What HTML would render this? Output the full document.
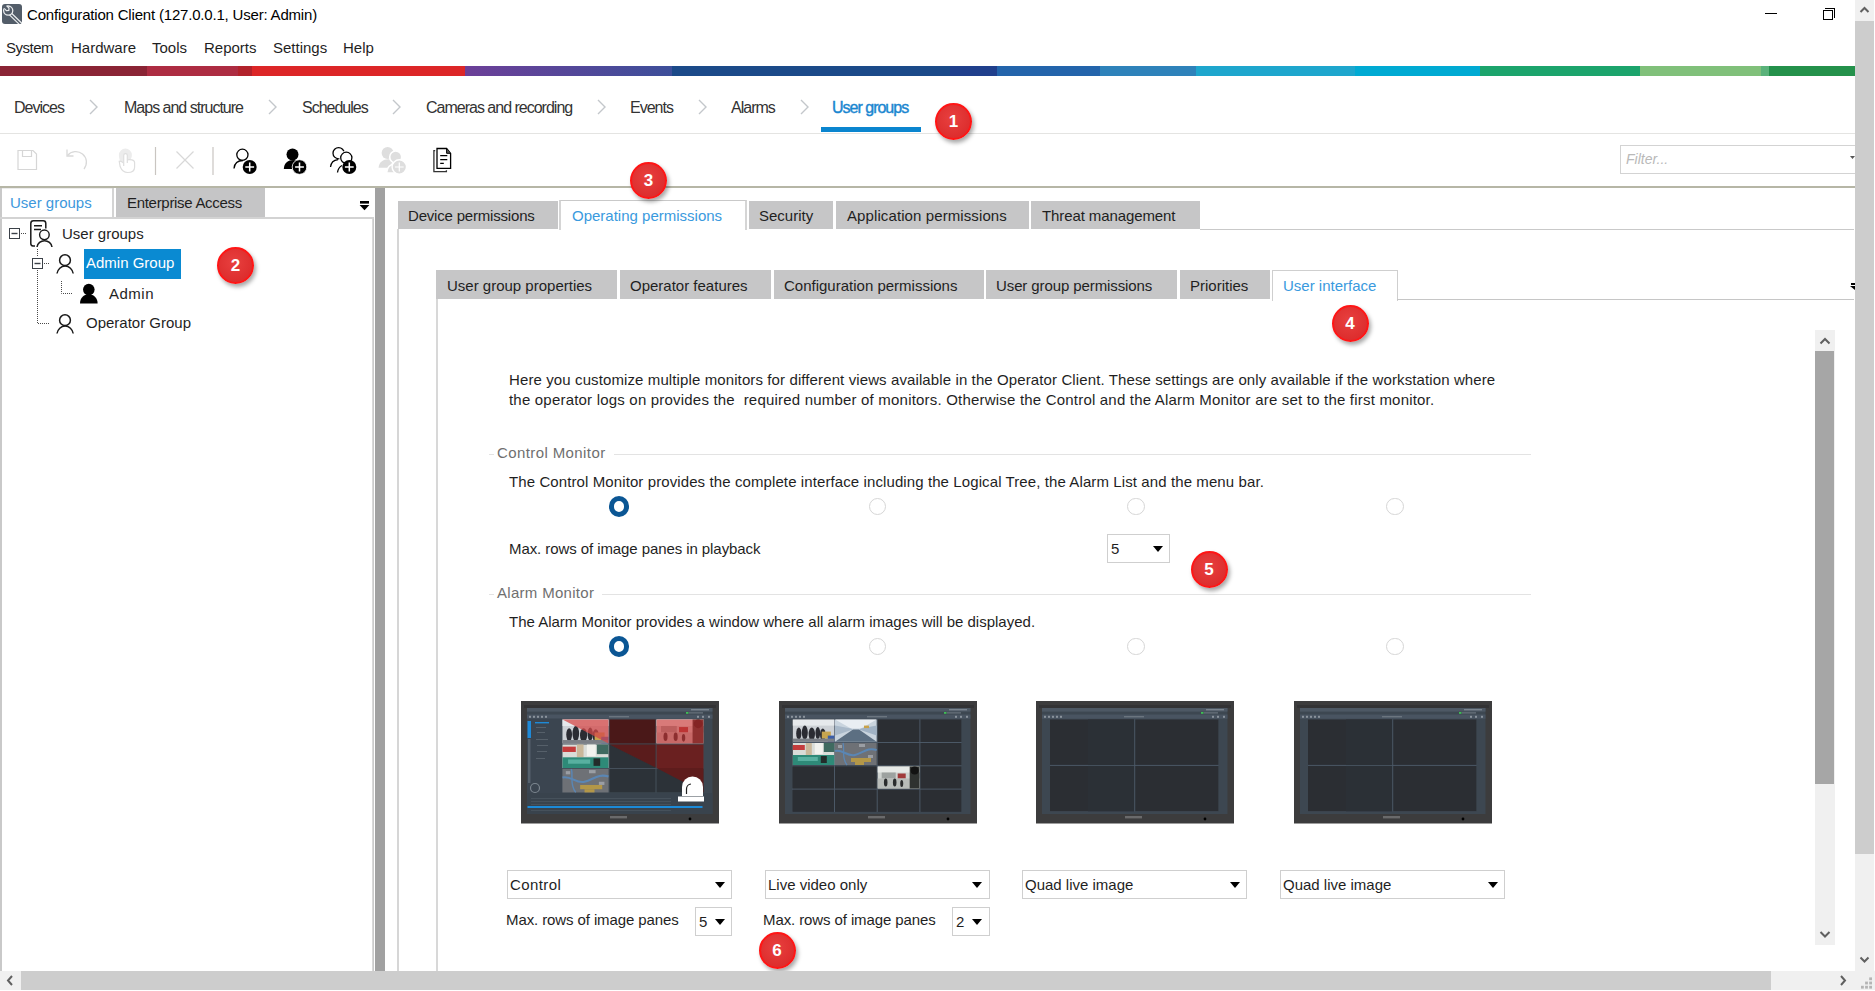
<!DOCTYPE html>
<html><head><meta charset="utf-8">
<style>
*{box-sizing:border-box;margin:0;padding:0}
html,body{width:1875px;height:991px;overflow:hidden;background:#fff;position:relative;font-family:"Liberation Sans",sans-serif;color:#1f1f1f}
.a{position:absolute}
.t{position:absolute;font-size:15px;line-height:20px;white-space:pre}
.bc{position:absolute;font-size:16px;line-height:20px;white-space:pre;letter-spacing:-1px;color:#333}
.chev{position:absolute;width:9px;height:16px}
.tab{position:absolute;background:#c6c6c7;}
.tabw{position:absolute;background:#fff;border:1px solid #d2d2d2;border-bottom:none}
.badge{position:absolute;width:37px;height:37px;border-radius:50%;background:radial-gradient(circle at 45% 40%,#e8403f 0%,#dd2e2e 70%);border:2px solid #ff1515;box-shadow:2px 3px 4px rgba(0,0,0,.35);color:#fff;font-weight:bold;font-size:17px;line-height:33px;text-align:center}
.combo{position:absolute;border:1px solid #cfcfcf;background:#fff}
.arr{position:absolute;width:0;height:0;border-left:5px solid transparent;border-right:5px solid transparent;border-top:6px solid #000}
.radio{position:absolute;width:19px;height:19px;border-radius:50%;border:1.5px solid #d6d6d6;background:#fff}
.radio.on{border:4px solid #0b5694}
</style></head><body>

<!-- ============ TITLE BAR ============ -->
<div class="a" style="left:2px;top:4px;width:20px;height:20px;background:#535d69;border-radius:3px"></div>
<svg class="a" style="left:2px;top:4px" width="20" height="20" viewBox="0 0 20 20">
 <path d="M8.6 10.2 L18.2 19.4" stroke="#e9ebed" stroke-width="3.8" stroke-linecap="round"/>
 <path d="M8.6 10.2 L18.2 19.4" stroke="#535d69" stroke-width="1.4" stroke-linecap="round"/>
 <circle cx="6.2" cy="6.6" r="4.6" fill="#535d69" stroke="#e9ebed" stroke-width="1.3"/>
 <path d="M1.2 3.6 L4.2 1.2 L7.4 4.6 L6.4 7.6 L3.6 7.8 Z" fill="#535d69"/>
 <path d="M2.2 4.4 L4.4 6.6 L6.8 6.4 L7 4 L4.6 1.8" fill="none" stroke="#e9ebed" stroke-width="1.2"/>
</svg>
<div class="t" style="left:27px;top:5px;color:#000;letter-spacing:-0.19px">Configuration Client (127.0.0.1, User: Admin)</div>
<div class="a" style="left:1765px;top:13px;width:12px;height:1px;background:#000"></div>
<div class="a" style="left:1823px;top:10px;width:10px;height:10px;border:1px solid #000;background:#fff"></div>
<div class="a" style="left:1825px;top:8px;width:10px;height:10px;border-top:1px solid #000;border-right:1px solid #000"></div>

<!-- ============ MENU ============ -->
<div class="t" style="left:6px;top:38px;letter-spacing:-0.5px">System</div>
<div class="t" style="left:71px;top:38px">Hardware</div>
<div class="t" style="left:152px;top:38px">Tools</div>
<div class="t" style="left:204px;top:38px">Reports</div>
<div class="t" style="left:273px;top:38px">Settings</div>
<div class="t" style="left:343px;top:38px">Help</div>

<!-- ============ COLOUR BAR ============ -->
<div class="a" style="left:0;top:66px;width:1855px;height:10px;background:linear-gradient(90deg,
#8a2435 0px,#8a2435 147px,#ad2c42 147px,#ad2c42 238px,#b2222b 238px,#b2222b 252px,#dc2627 252px,#dc2627 465px,
#6c3f98 465px,#3d4f9a 672px,#1b4a89 672px,#1b4a89 950px,#203f8c 950px,#203f8c 997px,#2364ab 997px,#2364ab 1100px,
#2e82ba 1100px,#2e82ba 1196px,#1ea6cd 1196px,#1ea6cd 1355px,#00aad3 1355px,#00aad3 1480px,#1ca46c 1480px,#1ca46c 1640px,
#80c07a 1640px,#80c07a 1761px,#5ab27a 1761px,#5ab27a 1769px,#24914b 1769px,#24914b 1855px)"></div>

<!-- ============ BREADCRUMB ============ -->
<div class="bc" style="left:14px;top:98px">Devices</div>
<div class="bc" style="left:124px;top:98px">Maps and structure</div>
<div class="bc" style="left:302px;top:98px">Schedules</div>
<div class="bc" style="left:426px;top:98px">Cameras and recording</div>
<div class="bc" style="left:630px;top:98px">Events</div>
<div class="bc" style="left:731px;top:98px">Alarms</div>
<div class="bc" style="left:832px;top:98px;color:#1a86d0;-webkit-text-stroke:0.4px #1a86d0">User groups</div>
<svg class="chev" style="left:89px;top:99px" viewBox="0 0 9 16"><path d="M1 1 L8 8 L1 15" fill="none" stroke="#c3c7cb" stroke-width="1.4"/></svg>
<svg class="chev" style="left:268px;top:99px" viewBox="0 0 9 16"><path d="M1 1 L8 8 L1 15" fill="none" stroke="#c3c7cb" stroke-width="1.4"/></svg>
<svg class="chev" style="left:392px;top:99px" viewBox="0 0 9 16"><path d="M1 1 L8 8 L1 15" fill="none" stroke="#c3c7cb" stroke-width="1.4"/></svg>
<svg class="chev" style="left:597px;top:99px" viewBox="0 0 9 16"><path d="M1 1 L8 8 L1 15" fill="none" stroke="#c3c7cb" stroke-width="1.4"/></svg>
<svg class="chev" style="left:698px;top:99px" viewBox="0 0 9 16"><path d="M1 1 L8 8 L1 15" fill="none" stroke="#c3c7cb" stroke-width="1.4"/></svg>
<svg class="chev" style="left:800px;top:99px" viewBox="0 0 9 16"><path d="M1 1 L8 8 L1 15" fill="none" stroke="#c3c7cb" stroke-width="1.4"/></svg>
<div class="a" style="left:821px;top:127px;width:100px;height:5px;background:#0a85cf"></div>
<div class="a" style="left:0;top:133px;width:1855px;height:1px;background:#e4e4e2"></div>

<!-- ============ TOOLBAR ============ -->
<svg class="a" style="left:0;top:140px" width="470" height="40" viewBox="0 140 470 40">
 <g fill="none" stroke="#d6d6d6" stroke-width="1.2">
  <path d="M18 150.5 H33 L36.5 154 V169.5 H18 Z"/>
  <path d="M22.5 150.5 V156.5 H31.5 V150.5"/>
 </g>
 <g fill="none" stroke="#d9d9d9" stroke-width="1.3">
  <path d="M67.5 155.5 A10 10 0 0 1 84 169"/>
  <path d="M67 149.5 V156 H73.5"/>
 </g>
 <g stroke="#dedede" stroke-width="1.2">
  <path d="M125.4 148.6 A6.5 6.5 0 0 1 131.9 155 C131.9 158 130.5 160 128.5 161.5 L121.5 163.5 C119.8 161 118.9 158 118.9 155 A6.5 6.5 0 0 1 125.4 148.6 Z" fill="#ececec" stroke="none"/>
  <path d="M127 159.8 C130 159.2 134.6 159.6 134.6 162.6 V167.2 C134.6 170.6 131.6 172.5 127.6 172.5 C123.8 172.5 121.6 170.2 120.2 166.8 L119.2 161.2 C120.5 160.8 122 161.5 123.6 163 Z" fill="#fff"/>
  <path d="M123.7 166 V155.5 A1.8 1.8 0 0 1 127.3 155.5 V163" fill="#fff"/>
 </g>
 <path d="M155.5 147 V175" stroke="#c9c5c1" stroke-width="1.2"/>
 <path d="M176.5 151.5 L193.5 168.5 M193.5 151.5 L176.5 168.5" stroke="#d8d8d8" stroke-width="1.2"/>
 <path d="M213 147 V175" stroke="#c9c5c1" stroke-width="1.2"/>
 <!-- add user outline -->
 <g>
  <circle cx="242.4" cy="154.8" r="5.6" fill="none" stroke="#000" stroke-width="1.3"/>
  <path d="M234 168.5 C234.5 163.5 238 160.5 243 160.5" fill="none" stroke="#000" stroke-width="1.3"/>
  <circle cx="249.7" cy="167" r="7" fill="#000"/>
  <path d="M249.7 162.6 V171.4 M245.3 167 H254.1" stroke="#fff" stroke-width="1.5"/>
 </g>
 <!-- add user filled -->
 <g>
  <circle cx="292.5" cy="154.5" r="6" fill="#000"/>
  <path d="M283.8 169 C284 163 288 160 293.5 160 L298 161 L292 169 Z" fill="#000"/>
  <circle cx="299.5" cy="167" r="7.3" fill="#000" stroke="#fff" stroke-width="0.8"/>
  <path d="M299.5 162.6 V171.4 M295.1 167 H303.9" stroke="#fff" stroke-width="1.5"/>
 </g>
 <!-- add group -->
 <g fill="none" stroke="#000" stroke-width="1.3">
  <circle cx="338.6" cy="153.2" r="5.6"/>
  <path d="M330.5 167 C331 162.5 334 160 338 159.6"/>
  <circle cx="346.3" cy="157.8" r="5.6" fill="#fff" stroke="#fff" stroke-width="3"/>
  <circle cx="346.3" cy="157.8" r="5.6"/>
  <path d="M337.5 172.5 C338 169 340 166.5 342 165.5"/>
  <circle cx="349.3" cy="167" r="7" fill="#000" stroke="none"/>
  <path d="M349.3 162.6 V171.4 M344.9 167 H353.7" stroke="#fff" stroke-width="1.5"/>
 </g>
 <!-- disabled group -->
 <g fill="#dedede">
  <circle cx="387.6" cy="153" r="6"/>
  <path d="M378.6 167.8 C379 162 383 159.2 388.5 159.2 L393 160 L390 167.8 Z"/>
  <g stroke="#fff" stroke-width="1.6">
   <circle cx="395.7" cy="157" r="6"/>
   <path d="M386.5 173 C387 167 390.5 164 395.7 164 C400 164 403 166 404 169 V173 Z"/>
  </g>
  <circle cx="399.3" cy="167" r="7.2" stroke="#fff" stroke-width="1.4"/>
  <path d="M399.3 162.6 V171.4 M394.9 167 H403.7" stroke="#fff" stroke-width="1.2"/>
 </g>
 <!-- documents -->
 <g fill="none" stroke="#000" stroke-width="1.3">
  <path d="M437 148.5 H446.6 L450.6 153.4 V168.3 H437 Z" fill="#fff"/>
  <path d="M446.6 148.8 V153.3 H450.4" fill="#555" stroke-width="1"/>
  <path d="M435.2 150.6 H433.9 V171.6 H446.4 V170.2" stroke="#333"/>
  <path d="M440.2 155.7 H447.3 M440.2 159.6 H447.3 M440.2 163.4 H443.8" stroke-width="1.3"/>
 </g>
</svg>
<div class="a" style="left:1620px;top:145px;width:240px;height:29px;border:1px solid #d3d3d3;background:#fff"></div>
<svg class="a" style="left:1849px;top:155px" width="6" height="6"><path d="M1 1 H6 L3.5 4 Z" fill="#555"/></svg>
<div class="t" style="left:1626px;top:149px;font-style:italic;color:#b9b9b9;font-size:14px">Filter...</div>
<div class="a" style="left:0;top:186px;width:1855px;height:2px;background:#b6b6a6"></div>


<!-- ============ LEFT PANEL ============ -->
<div class="a" style="left:0;top:188px;width:2px;height:783px;background:#c9c9c9"></div>
<div class="a" style="left:372px;top:218px;width:2px;height:753px;background:linear-gradient(90deg,#e0e0e0,#c4c4c4)"></div>
<div class="a" style="left:2px;top:188px;width:111px;height:30px;background:#fff;border-top:1px solid #ececec"></div>
<div class="a" style="left:112px;top:188px;width:2px;height:30px;background:#d4d4d4"></div>
<div class="a" style="left:116px;top:188px;width:149px;height:29px;background:#c5c5c6"></div>
<div class="a" style="left:0;top:217px;width:374px;height:2px;background:#d3d3d3"></div>
<div class="t" style="left:10px;top:193px;color:#3d98dc">User groups</div>
<div class="t" style="left:127px;top:193px;color:#1f1f1f;letter-spacing:-0.3px">Enterprise Access</div>
<svg class="a" style="left:358px;top:199px" width="14" height="14"><rect x="2" y="2" width="9" height="2.6" fill="#000"/><path d="M1.6 6 H11.4 L6.5 11.2 Z" fill="#000"/></svg>
<!-- splitter -->
<div class="a" style="left:375px;top:188px;width:10px;height:783px;background:#a1a1a1"></div>

<!-- tree -->
<svg class="a" style="left:0;top:218px" width="200" height="125" viewBox="0 218 200 125">
 <g fill="none" stroke="#3b4148" stroke-width="1">
  <rect x="9.5" y="228.5" width="10" height="10"/>
  <path d="M11.5 233.5 H17.5" stroke-width="1.4"/>
  <rect x="32.5" y="258.5" width="10" height="10"/>
  <path d="M34.5 263.5 H40.5" stroke-width="1.4"/>
 </g>
 <g stroke="#4a4a4a" stroke-width="1" stroke-dasharray="1 1" fill="none">
  <path d="M21 233.5 H26"/>
  <path d="M37.5 249 V257"/>
  <path d="M44 263.5 H50"/>
  <path d="M37.5 270 V323.5 H50"/>
  <path d="M61.5 281 V293.5 H73"/>
 </g>
 <!-- doc+user icon -->
 <g fill="none" stroke="#1a1a1a" stroke-width="1.5">
  <path d="M35 246 H33 A2.5 2.5 0 0 1 30.8 243.5 V223.4 A2.6 2.6 0 0 1 33.4 220.8 H43.2 A2.6 2.6 0 0 1 45.8 223.4 V228.5"/>
  <path d="M34 225.8 H42 M34 229.4 H41"/>
  <circle cx="44.4" cy="234.8" r="4.8" stroke-width="1.4"/>
  <path d="M37 247 A7.6 7.6 0 0 1 52 247" stroke-width="1.5"/>
 </g>
 <!-- outline person admin group -->
 <g fill="none" stroke="#1a1a1a" stroke-width="1.5">
  <circle cx="65" cy="260.2" r="5.4"/>
  <path d="M57 273.5 A8.2 8.8 0 0 1 73.2 273.5"/>
  <circle cx="65" cy="320.2" r="5.4"/>
  <path d="M57 333.5 A8.2 8.8 0 0 1 73.2 333.5"/>
 </g>
 <!-- filled person -->
 <g fill="#000">
  <circle cx="88.8" cy="289.6" r="5.8"/>
  <path d="M80 303.6 C80 298 83.5 294.6 88.8 294.6 C94 294.6 97.6 298 97.6 303.6 Z"/>
 </g>
</svg>
<div class="a" style="left:84px;top:249px;width:97px;height:30px;background:#0a8ad2"></div>
<div class="t" style="left:62px;top:224px">User groups</div>
<div class="t" style="left:86px;top:253px;color:#fff">Admin Group</div>
<div class="t" style="left:109px;top:284px;letter-spacing:0.5px">Admin</div>
<div class="t" style="left:86px;top:313px">Operator Group</div>


<!-- ============ RIGHT PANEL ============ -->
<!-- tab row 1 -->
<div class="tab" style="left:398px;top:201px;width:160px;height:28px"></div>
<div class="a" style="left:559px;top:200px;width:188px;height:30px;background:#fff;border:2px solid #d5d5d5;border-top:1px solid #c9c9c9;border-bottom:none"></div>
<div class="tab" style="left:749px;top:201px;width:84px;height:28px"></div>
<div class="tab" style="left:836px;top:201px;width:193px;height:28px"></div>
<div class="tab" style="left:1031px;top:201px;width:169px;height:28px"></div>
<div class="a" style="left:1200px;top:229px;width:654px;height:1px;background:#c9c9c9"></div>
<div class="a" style="left:397px;top:229px;width:2px;height:742px;background:#d6d6d6"></div>
<div class="t" style="left:408px;top:206px;letter-spacing:-0.19px">Device permissions</div>
<div class="t" style="left:572px;top:206px;color:#3a9ade">Operating permissions</div>
<div class="t" style="left:759px;top:206px">Security</div>
<div class="t" style="left:847px;top:206px;letter-spacing:0.1px">Application permissions</div>
<div class="t" style="left:1042px;top:206px;letter-spacing:-0.1px">Threat management</div>

<!-- tab row 2 -->
<div class="tab" style="left:436px;top:270px;width:181px;height:29px"></div>
<div class="tab" style="left:620px;top:270px;width:151px;height:29px"></div>
<div class="tab" style="left:774px;top:270px;width:210px;height:29px"></div>
<div class="tab" style="left:986px;top:270px;width:191px;height:29px"></div>
<div class="tab" style="left:1180px;top:270px;width:90px;height:29px"></div>
<div class="a" style="left:1272px;top:270px;width:126px;height:31px;background:#fff;border:1px solid #cfcfcf;border-bottom:none"></div>
<div class="a" style="left:1397px;top:299px;width:457px;height:1px;background:#c6c6c6"></div>
<div class="a" style="left:436px;top:299px;width:2px;height:672px;background:#d8d8d8"></div>
<div class="t" style="left:447px;top:276px">User group properties</div>
<div class="t" style="left:630px;top:276px">Operator features</div>
<div class="t" style="left:784px;top:276px">Configuration permissions</div>
<div class="t" style="left:996px;top:276px;letter-spacing:-0.1px">User group permissions</div>
<div class="t" style="left:1190px;top:276px">Priorities</div>
<div class="t" style="left:1283px;top:276px;color:#3a9ade">User interface</div>
<svg class="a" style="left:1848px;top:282px" width="7" height="10"><rect x="3" y="1" width="4" height="2" fill="#000"/><path d="M2 4 H7 V8 Z" fill="#000"/></svg>

<!-- inner scrollbar -->
<div class="a" style="left:1815px;top:330px;width:20px;height:615px;background:#f0f0f0"></div>
<div class="a" style="left:1815px;top:351px;width:19px;height:433px;background:#a6a6a6"></div>
<svg class="a" style="left:1815px;top:330px" width="20" height="21"><path d="M5.5 13.5 L10 9 L14.5 13.5" fill="none" stroke="#606060" stroke-width="2"/></svg>
<svg class="a" style="left:1815px;top:924px" width="20" height="21"><path d="M5.5 8 L10 12.5 L14.5 8" fill="none" stroke="#606060" stroke-width="2"/></svg>

<!-- content -->
<div class="t" style="left:509px;top:370px;letter-spacing:0.11px">Here you customize multiple monitors for different views available in the Operator Client. These settings are only available if the workstation where</div>
<div class="t" style="left:509px;top:390px;letter-spacing:0.2px">the operator logs on provides the  required number of monitors. Otherwise the Control and the Alarm Monitor are set to the first monitor.</div>

<div class="a" style="left:489px;top:454px;width:5px;height:1px;background:#e3e3e3"></div>
<div class="a" style="left:614px;top:454px;width:917px;height:1px;background:#e3e3e3"></div>
<div class="t" style="left:497px;top:443px;color:#6f6f6f;letter-spacing:0.4px">Control Monitor</div>
<div class="t" style="left:509px;top:472px;letter-spacing:0.1px">The Control Monitor provides the complete interface including the Logical Tree, the Alarm List and the menu bar.</div>
<div class="radio on" style="left:608.5px;top:496px;width:20.5px;height:20.5px;border-width:5px"></div>
<div class="radio" style="left:868.5px;top:497.5px;width:17.5px;height:17.5px"></div>
<div class="radio" style="left:1127px;top:497.5px;width:17.5px;height:17.5px"></div>
<div class="radio" style="left:1386px;top:497.5px;width:17.5px;height:17.5px"></div>
<div class="t" style="left:509px;top:539px;letter-spacing:-0.08px">Max. rows of image panes in playback</div>
<div class="combo" style="left:1107px;top:534px;width:63px;height:29px"></div>
<div class="t" style="left:1111px;top:539px">5</div>
<div class="arr" style="left:1153px;top:546px"></div>

<div class="a" style="left:489px;top:594px;width:5px;height:1px;background:#e3e3e3"></div>
<div class="a" style="left:602px;top:594px;width:929px;height:1px;background:#e3e3e3"></div>
<div class="t" style="left:497px;top:583px;color:#6f6f6f;letter-spacing:0.3px">Alarm Monitor</div>
<div class="t" style="left:509px;top:612px">The Alarm Monitor provides a window where all alarm images will be displayed.</div>
<div class="radio on" style="left:608.5px;top:636px;width:20.5px;height:20.5px;border-width:5px"></div>
<div class="radio" style="left:868.5px;top:637.5px;width:17.5px;height:17.5px"></div>
<div class="radio" style="left:1127px;top:637.5px;width:17.5px;height:17.5px"></div>
<div class="radio" style="left:1386px;top:637.5px;width:17.5px;height:17.5px"></div>

<!-- combos -->
<div class="combo" style="left:507px;top:870px;width:225px;height:29px"></div>
<div class="t" style="left:510px;top:875px;letter-spacing:0.4px">Control</div>
<div class="arr" style="left:715px;top:882px"></div>
<div class="combo" style="left:765px;top:870px;width:225px;height:29px"></div>
<div class="t" style="left:768px;top:875px">Live video only</div>
<div class="arr" style="left:972px;top:882px"></div>
<div class="combo" style="left:1022px;top:870px;width:225px;height:29px"></div>
<div class="t" style="left:1025px;top:875px">Quad live image</div>
<div class="arr" style="left:1230px;top:882px"></div>
<div class="combo" style="left:1280px;top:870px;width:225px;height:29px"></div>
<div class="t" style="left:1283px;top:875px">Quad live image</div>
<div class="arr" style="left:1488px;top:882px"></div>

<div class="t" style="left:506px;top:910px;letter-spacing:-0.1px">Max. rows of image panes</div>
<div class="combo" style="left:695px;top:907px;width:37px;height:29px"></div>
<div class="t" style="left:699px;top:912px">5</div>
<div class="arr" style="left:715px;top:919px"></div>
<div class="t" style="left:763px;top:910px;letter-spacing:-0.1px">Max. rows of image panes</div>
<div class="combo" style="left:952px;top:907px;width:38px;height:29px"></div>
<div class="t" style="left:956px;top:912px">2</div>
<div class="arr" style="left:972px;top:919px"></div>


<!-- ============ MONITORS ============ -->
<svg class="a" style="left:0;top:0;pointer-events:none" width="1875" height="991">
<defs>
 <g id="base">
  <rect x="0" y="0" width="198" height="122.5" fill="#3c3c3d"/>
  <rect x="3" y="4" width="192" height="3" fill="#333335"/>
  <rect x="6" y="7" width="185.5" height="106" fill="#3d4751"/>
  <rect x="6" y="7" width="185.5" height="3.6" fill="#4d5864"/>
  <rect x="6" y="13.5" width="185.5" height="4.2" fill="#495461"/>
  <rect x="170" y="8" width="18" height="1.4" fill="#7a848e"/>
  <g fill="#8a939c"><rect x="8" y="14.8" width="2" height="2"/><rect x="12" y="14.8" width="2" height="2"/><rect x="16" y="14.8" width="2" height="2"/><rect x="20" y="14.8" width="2" height="2"/><rect x="24" y="14.8" width="2" height="2"/><rect x="176" y="14.8" width="2" height="2"/><rect x="181" y="14.8" width="2" height="2"/><rect x="187" y="14.8" width="2" height="2"/></g>
  <rect x="165" y="11" width="2.5" height="1.8" fill="#3fbf55"/>
  <rect x="168" y="11.3" width="14" height="1.2" fill="#6b757f"/>
  <rect x="88" y="15" width="20" height="1.4" fill="#6b757f"/>
  <rect x="89" y="115" width="17" height="2.4" fill="#6a6a6b"/>
  <circle cx="169" cy="118" r="1.4" fill="#000"/>
 </g>
 <g id="quad">
  <use href="#base"/>
  <rect x="14" y="18.4" width="168.5" height="92" fill="#4b5866"/>
  <rect x="14" y="18.4" width="84.2" height="45.5" fill="#2b2e33"/>
  <rect x="99.2" y="18.4" width="83.3" height="45.5" fill="#2b2e33"/>
  <rect x="14" y="64.9" width="84.2" height="45.4" fill="#2b2e33"/>
  <rect x="99.2" y="64.9" width="83.3" height="45.4" fill="#2b2e33"/>
  <rect x="52" y="18.4" width="46" height="45.5" fill="#2c3137" opacity=".8"/>
  <rect x="52" y="64.9" width="46" height="45.4" fill="#2c3137" opacity=".8"/>
 </g>
 
 <g id="ph_crowd">
  <rect width="41.5" height="22.2" fill="#cdd1d6"/>
  <rect x="0" y="0" width="41.5" height="6" fill="#e6e9ec"/>
  <g fill="#2b2c33"><ellipse cx="6" cy="14" rx="2.6" ry="6"/><ellipse cx="12" cy="13" rx="3" ry="7"/><ellipse cx="19" cy="14.5" rx="3.2" ry="6.5"/><ellipse cx="25" cy="13.5" rx="2.4" ry="6"/><ellipse cx="30" cy="15" rx="2.8" ry="6"/></g>
  <rect x="29" y="12" width="9" height="7" fill="#c7a54f"/>
  <rect x="35" y="16" width="6.5" height="6.2" fill="#3b5ea8"/>
  <rect x="0" y="19" width="41.5" height="3.2" fill="#7b7f86"/>
 </g>
 <g id="ph_corr">
  <rect width="41.7" height="22.2" fill="#c9d4de"/>
  <polygon points="0,0 41.7,0 26,9 16,9" fill="#e9eef3"/>
  <polygon points="0,22.2 41.7,22.2 24,10 18,10" fill="#5c6f82"/>
  <polygon points="0,6 16,9 18,10 0,16" fill="#a9b9c9"/>
  <polygon points="41.7,6 26,9 24,10 41.7,16" fill="#a0b2c4"/>
  <rect x="29" y="6" width="5" height="2.5" fill="#c9a24a"/>
 </g>
 <g id="ph_green">
  <rect width="41.5" height="22" fill="#d9dcd8"/>
  <rect x="0" y="2" width="12" height="5" fill="#c43c3c"/>
  <rect x="13" y="0" width="6" height="12" fill="#c9b79a"/>
  <rect x="22" y="0" width="8" height="11" fill="#f2f2ee"/>
  <rect x="31" y="0" width="10.5" height="9" fill="#3f6a60"/>
  <rect x="0" y="12" width="41.5" height="10" fill="#2e8a78"/>
  <rect x="5" y="14" width="20" height="4" fill="#58b0a0"/>
  <rect x="28" y="13" width="6" height="7" fill="#232c2a"/>
 </g>
 <g id="ph_map">
  <rect width="41.7" height="22" fill="#6e7176"/>
  <path d="M0 8 C8 6 12 14 20 12 S32 4 41.7 7" stroke="#5a86b4" stroke-width="2" fill="none"/>
  <path d="M8 0 C10 6 6 14 12 22" stroke="#5a86b4" stroke-width="1.3" fill="none"/>
  <g fill="#9a9ea4"><rect x="3" y="2" width="4" height="3"/><rect x="24" y="1" width="6" height="3"/><rect x="33" y="12" width="5" height="3"/></g>
  <rect x="16" y="15" width="20" height="4" fill="#b39748"/>
  <rect x="20" y="19" width="9" height="3" fill="#b39748"/>
 </g>
 <g id="ph_street">
  <rect width="41.7" height="22" fill="#cfd3d0"/>
  <rect x="0" y="0" width="41.7" height="6" fill="#e6e9e6"/>
  <rect x="4" y="6" width="14" height="6" fill="#9da2a0"/>
  <rect x="20" y="7" width="8" height="5" fill="#a03a3a"/>
  <rect x="0" y="12" width="41.7" height="10" fill="#b8bcb9"/>
  <g fill="#2a2c2d"><ellipse cx="8" cy="16" rx="1.8" ry="4"/><ellipse cx="17" cy="16" rx="1.8" ry="4"/><ellipse cx="24" cy="17" rx="1.5" ry="3.5"/></g>
  <rect x="32" y="0" width="9.7" height="22" fill="#2f3230"/>
  <circle cx="37" cy="4" r="4" fill="#121212"/>
 </g>
 <linearGradient id="crowd" x1="0" y1="0" x2="1" y2="1"><stop offset="0" stop-color="#d9dde2"/><stop offset=".4" stop-color="#8d8f96"/><stop offset=".7" stop-color="#3a3c44"/><stop offset="1" stop-color="#b9a06a"/></linearGradient>
 <linearGradient id="corr" x1="0" y1="0" x2="0" y2="1"><stop offset="0" stop-color="#dfe6ee"/><stop offset=".5" stop-color="#8fa4ba"/><stop offset="1" stop-color="#4d5e70"/></linearGradient>
 <linearGradient id="green" x1="0" y1="0" x2="0" y2="1"><stop offset="0" stop-color="#d8d2c8"/><stop offset=".35" stop-color="#c24040"/><stop offset=".5" stop-color="#d4d9d6"/><stop offset=".75" stop-color="#2e8a78"/><stop offset="1" stop-color="#1f5c52"/></linearGradient>
 <linearGradient id="map" x1="0" y1="0" x2="1" y2="1"><stop offset="0" stop-color="#6c6f74"/><stop offset=".5" stop-color="#7b8592"/><stop offset=".8" stop-color="#9c8b5c"/><stop offset="1" stop-color="#6c6f74"/></linearGradient>
 <linearGradient id="street" x1="0" y1="0" x2="1" y2="0"><stop offset="0" stop-color="#c9ccc9"/><stop offset=".5" stop-color="#8f9290"/><stop offset=".75" stop-color="#b6b9b5"/><stop offset="1" stop-color="#2a2c2b"/></linearGradient>
 <linearGradient id="redph" x1="0" y1="0" x2="1" y2="1"><stop offset="0" stop-color="#e8b0b0"/><stop offset=".5" stop-color="#c03a3a"/><stop offset="1" stop-color="#7a2020"/></linearGradient>
</defs>

<!-- monitor 1 -->
<g transform="translate(521,701)">
 <use href="#base"/>
 <rect x="6" y="17.7" width="35" height="75" fill="#3b4550"/>
 <rect x="6.5" y="20" width="3.5" height="17" fill="#1f8ad8"/>
 <rect x="7" y="38" width="2.5" height="44" fill="#56616c"/>
 <g fill="#56606a"><rect x="14" y="21" width="14" height="1.4" fill="#1e8ad6"/><rect x="15" y="26" width="10" height="1"/><rect x="16" y="31" width="8" height="1"/><rect x="15" y="38" width="12" height="1"/><rect x="16" y="44" width="11" height="1"/><rect x="16" y="50" width="10" height="1"/><rect x="15" y="57" width="9" height="1"/></g>
 <circle cx="14" cy="87" r="4.5" fill="none" stroke="#7c868f" stroke-width="1.2"/>
 <rect x="41" y="18.5" width="141.6" height="73" fill="#45505b"/>
 <g transform="translate(41.5,18.5) scale(1.108,1.08)"><use href="#ph_crowd"/></g>
 <polygon points="41.5,18.5 87.5,18.5 87.5,42.5" fill="#d44848" opacity=".75"/>
 <rect x="88.5" y="18.5" width="46" height="24" fill="#4a1818"/>
 <g transform="translate(135.5,18.5) scale(1.127,1.08)"><use href="#ph_street"/></g>
 <rect x="135.5" y="18.5" width="47" height="24" fill="#d03030" opacity=".6"/>
 <g transform="translate(41.5,43.5) scale(1.108,1.068)"><use href="#ph_green"/></g>
 <rect x="88.5" y="43.5" width="46" height="23.5" fill="#2c3238"/>
 <polygon points="88.5,43.5 134.5,43.5 134.5,66.5" fill="#5a1c1c"/>
 <rect x="135.5" y="43.5" width="47" height="23.5" fill="#6a2020"/>
 <g transform="translate(41.5,68) scale(1.103,1.064)"><use href="#ph_map"/></g>
 <rect x="88.5" y="68" width="46" height="23.4" fill="#2c3238"/>
 <rect x="135.5" y="68" width="47" height="23.4" fill="#2c3238"/>
 <polygon points="135.5,67 182.5,67 182.5,91.4" fill="#5e1c1c"/>
 <rect x="6" y="92" width="185.5" height="21" fill="#39434d"/>
 <g fill="#4a5560"><rect x="10" y="97" width="140" height="0.8"/><rect x="10" y="100" width="140" height="0.8"/><rect x="10" y="103" width="140" height="0.8"/><rect x="10" y="109" width="140" height="0.8"/></g>
 <rect x="6.5" y="105" width="175" height="2" fill="#1b8ad8"/>
 <path d="M161 95 V86 A10.5 10.5 0 0 1 182 86 V95 Z" fill="#fff"/>
 <path d="M165.5 93 V88 A5 5 0 0 1 170 83" fill="none" stroke="#222" stroke-width="1.2"/>
 <rect x="157" y="95.5" width="26" height="5" fill="#fff"/>
</g>

<!-- monitor 2 -->
<g transform="translate(779,701)">
 <use href="#base"/>
 <rect x="13" y="18.4" width="169.5" height="92.6" fill="#4b5866"/>
 <g fill="#2b2e33">
  <rect x="13.3" y="18.4" width="41.7" height="22.6"/><rect x="56" y="18.4" width="41.7" height="22.6"/><rect x="98.7" y="18.4" width="41.7" height="22.6"/><rect x="141.4" y="18.4" width="41.1" height="22.6"/>
  <rect x="13.3" y="42" width="41.7" height="22.3"/><rect x="56" y="42" width="41.7" height="22.3"/><rect x="98.7" y="42" width="41.7" height="22.3"/><rect x="141.4" y="42" width="41.1" height="22.3"/>
  <rect x="13.3" y="65.3" width="41.7" height="22.3"/><rect x="56" y="65.3" width="41.7" height="22.3"/><rect x="98.7" y="65.3" width="41.7" height="22.3"/><rect x="141.4" y="65.3" width="41.1" height="22.3"/>
  <rect x="13.3" y="88.6" width="41.7" height="22.3"/><rect x="56" y="88.6" width="41.7" height="22.3"/><rect x="98.7" y="88.6" width="41.7" height="22.3"/><rect x="141.4" y="88.6" width="41.1" height="22.3"/>
 </g>
 <g transform="translate(13.8,18.6)"><use href="#ph_crowd"/></g>
 <g transform="translate(56,18.6)"><use href="#ph_corr"/></g>
 <g transform="translate(13.8,42)"><use href="#ph_green"/></g>
 <g transform="translate(56,42)"><use href="#ph_map"/></g>
 <g transform="translate(98.7,65.5)"><use href="#ph_street"/></g>
</g>

<!-- monitor 3,4 -->
<g transform="translate(1036,701)"><use href="#quad"/></g>
<g transform="translate(1294,701)"><use href="#quad"/></g>
</svg>

<!-- ============ BADGES ============ -->
<div class="badge" style="left:935px;top:102.5px">1</div>
<div class="badge" style="left:217px;top:246.5px">2</div>
<div class="badge" style="left:630px;top:162px">3</div>
<div class="badge" style="left:1331.5px;top:304.5px">4</div>
<div class="badge" style="left:1190.5px;top:550.5px">5</div>
<div class="badge" style="left:758.5px;top:931.5px">6</div>

<!-- ============ OUTER SCROLLBARS ============ -->
<div class="a" style="left:1855px;top:0;width:19px;height:971px;background:#f0f0f0"></div>
<div class="a" style="left:1855px;top:21px;width:19px;height:833px;background:#cdcdcd"></div>
<svg class="a" style="left:1855px;top:0" width="19" height="20"><path d="M5.5 12 L9.5 8 L13.5 12" fill="none" stroke="#606060" stroke-width="2"/></svg>
<svg class="a" style="left:1855px;top:950px" width="19" height="20"><path d="M5.5 7.5 L9.5 11.5 L13.5 7.5" fill="none" stroke="#606060" stroke-width="2"/></svg>
<div class="a" style="left:0;top:971px;width:1875px;height:19px;background:#f0f0f0"></div>
<div class="a" style="left:21px;top:971px;width:1750px;height:19px;background:#cdcdcd"></div>
<svg class="a" style="left:0;top:971px" width="21" height="19"><path d="M12 5 L8 9.5 L12 14" fill="none" stroke="#606060" stroke-width="2"/></svg>
<svg class="a" style="left:1832px;top:971px" width="21" height="19"><path d="M9 5 L13 9.5 L9 14" fill="none" stroke="#606060" stroke-width="2"/></svg>
<svg class="a" style="left:1855px;top:971px" width="20" height="20"><g fill="#b4b4b4"><rect x="14.2" y="6.4" width="2.8" height="2.8"/><rect x="10.1" y="10.6" width="2.8" height="2.8"/><rect x="14.2" y="10.6" width="2.8" height="2.8"/><rect x="6" y="14.8" width="2.8" height="2.8"/><rect x="10.1" y="14.8" width="2.8" height="2.8"/><rect x="14.2" y="14.8" width="2.8" height="2.8"/></g></svg>



</body></html>
